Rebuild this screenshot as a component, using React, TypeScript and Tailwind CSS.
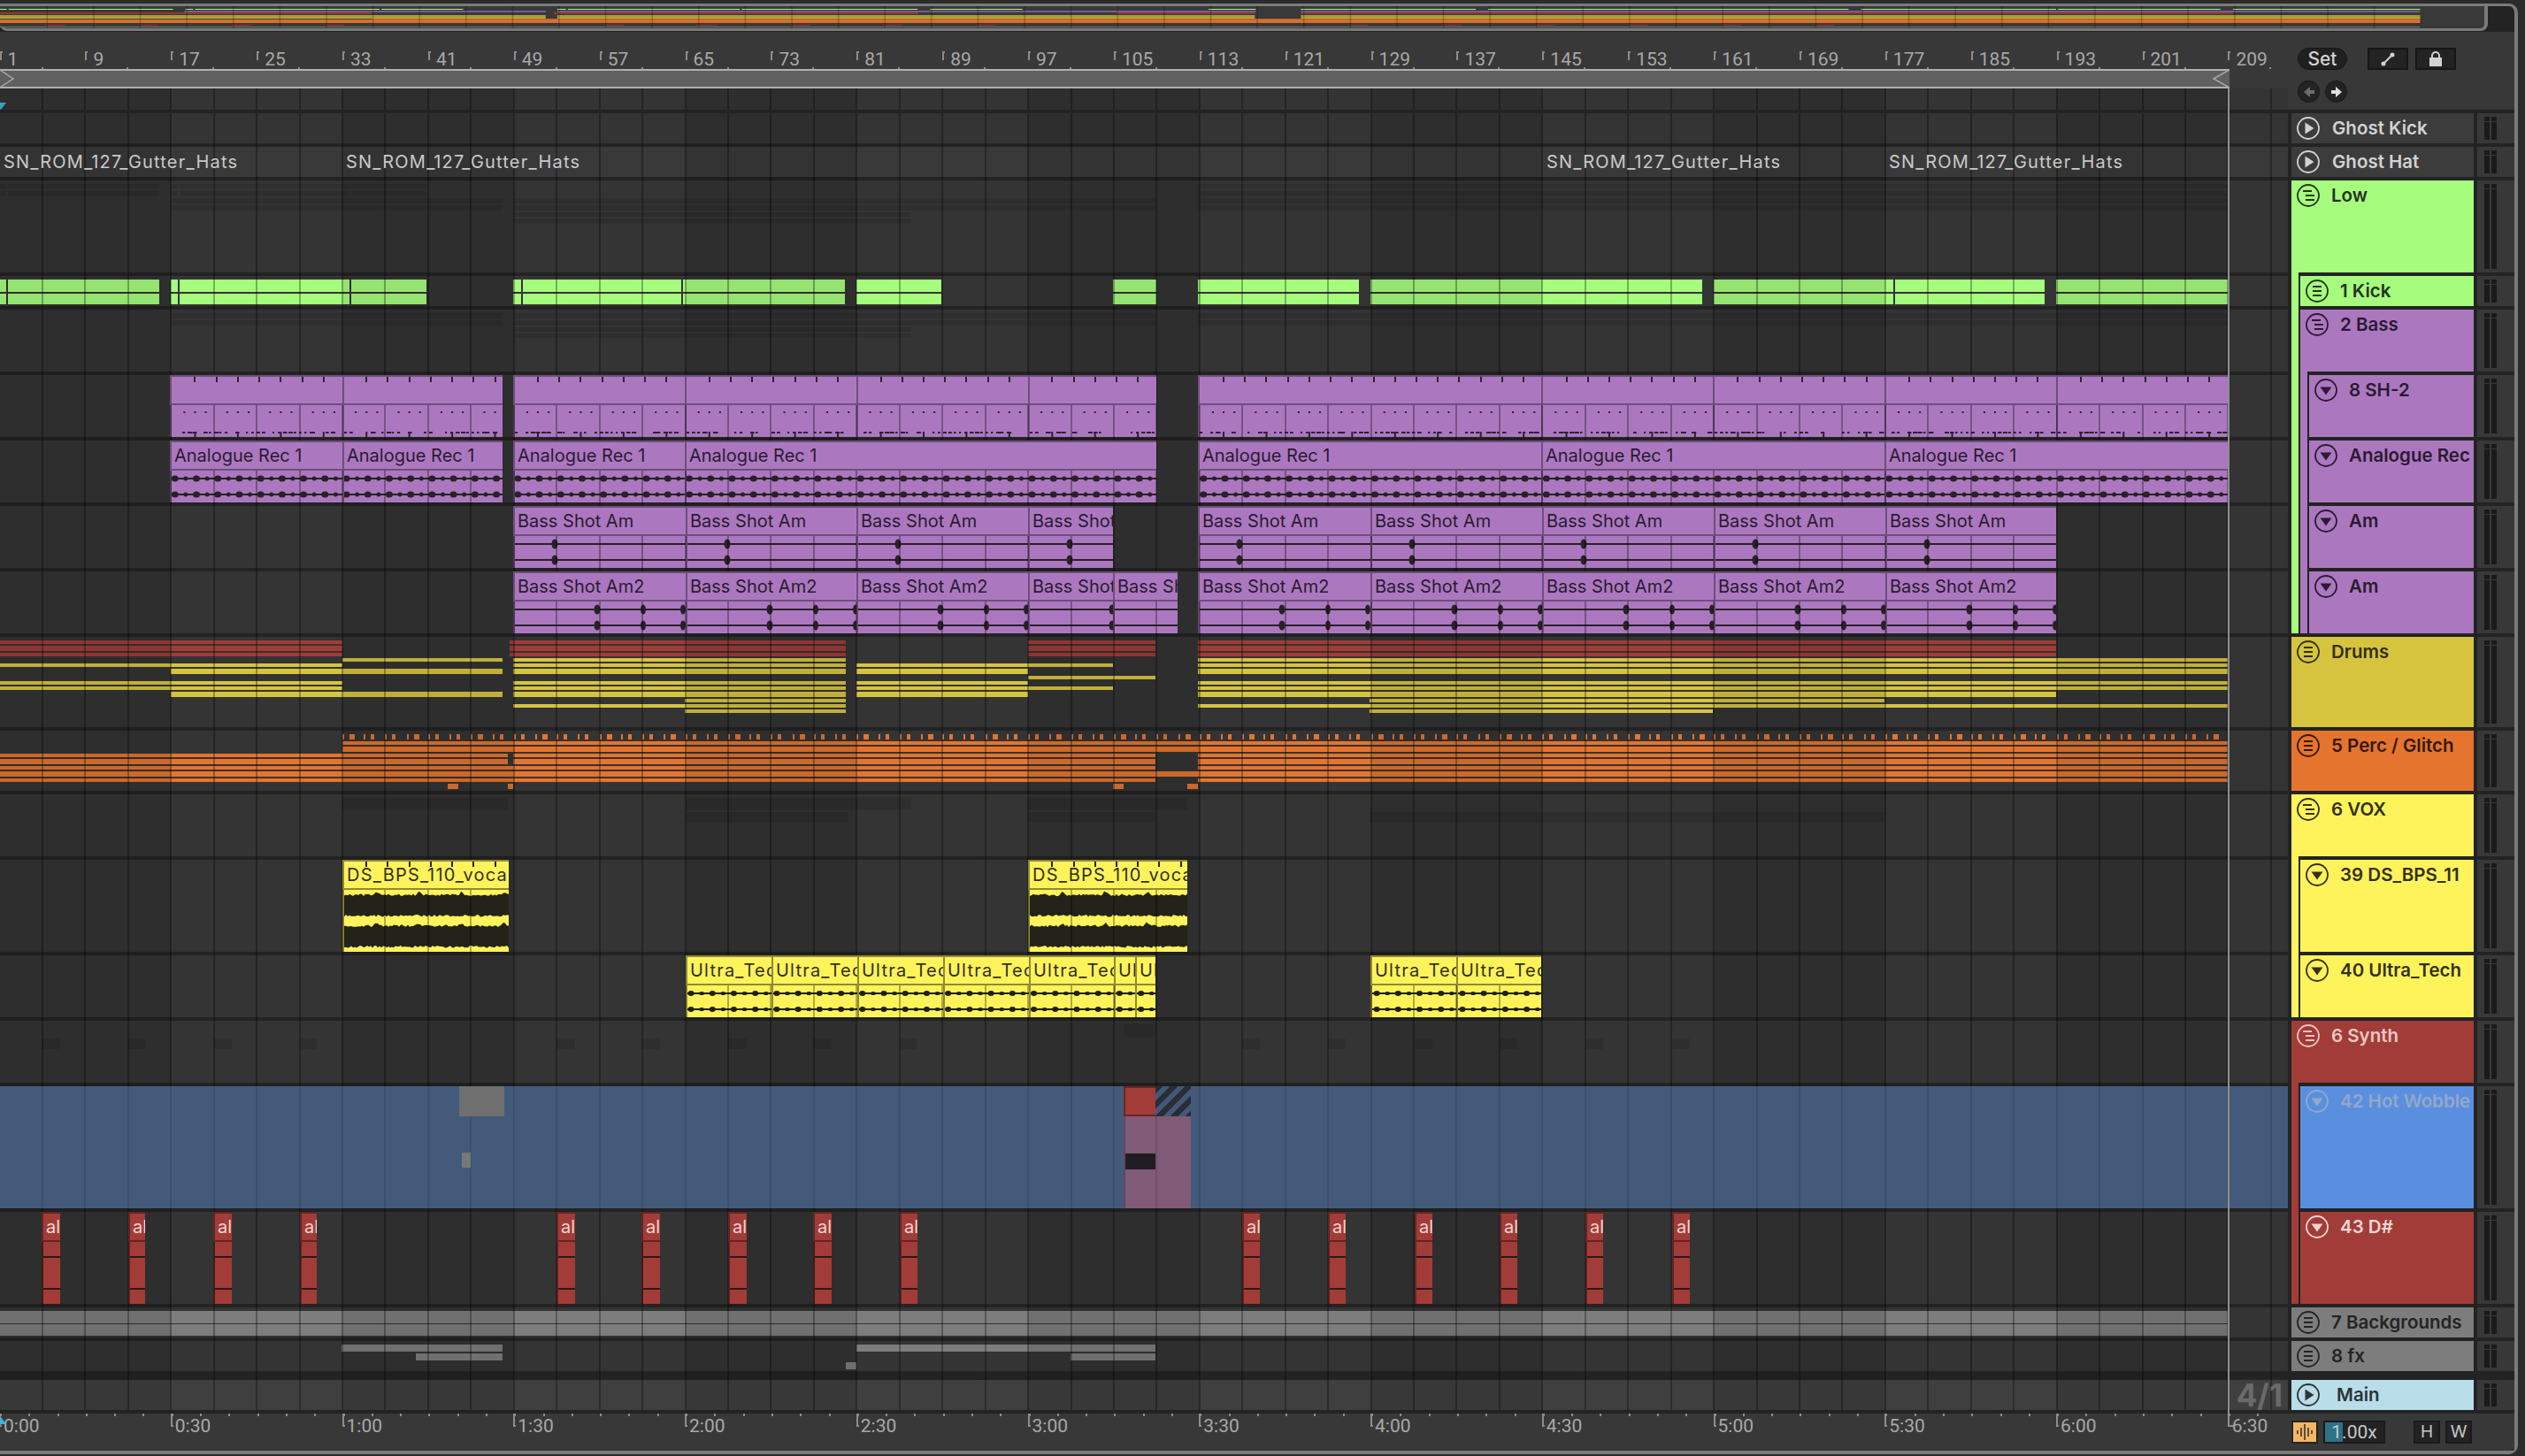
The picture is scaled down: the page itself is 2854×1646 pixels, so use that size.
import React from "react";

const GREEN = "#a6fd7d";
const PURPLE = "#ab78bf";
const DRUM = "#d6c43f";
const ORANGE = "#e5742f";
const VOX = "#fff35c";
const RED = "#a23c38";
const BLUE = "#5a8fe0";
const GRAY = "#7d7d7d";
const K = 48.44;
const xk = (k: number) => k * K - 0.5;
const xb = (b: number) => xk((b - 1) / 4);
const range = (n: number) => Array.from({ length: n }, (_, i) => i);
const rnd = (i: number, s = 0) => {
  const v = Math.sin(i * 12.9898 + s * 78.233) * 43758.5453;
  return v - Math.floor(v);
};

type Seg = [number, number];
type Bar = [number, number, number, number];

function Rect({ b, top, color }: { b: Bar; top: number; color: string }) {
  return (
    <div
      className="absolute"
      style={{ left: b[0], width: b[1] - b[0], top: b[2] - top, height: b[3] - b[2], background: color }}
    />
  );
}

function Grid({ alpha = false }: { alpha?: boolean }) {
  return (
    <>
      {range(13).map((i) =>
        i % 2 === 0 ? (
          <div
            key={"b" + i}
            className="absolute top-0 bottom-0 z-[5] bg-black/10 pointer-events-none"
            style={{ left: xk(i * 4), width: 4 * K }}
          />
        ) : null
      )}
      {range(53).map((i) => (
        <div
          key={i}
          className={"absolute top-0 bottom-0 w-[2px] z-10 pointer-events-none " + (alpha ? "bg-black/10" : "bg-black/30")}
          style={{ left: xk(i + 1) - 1 }}
        />
      ))}
    </>
  );
}

function Clip({
  x1,
  x2,
  title,
  bg,
  edge,
  fg,
  ticks,
  wide,
  children,
}: {
  x1: number;
  x2: number;
  title?: string;
  bg: string;
  edge: string;
  fg: string;
  ticks?: boolean;
  wide?: boolean;
  children?: React.ReactNode;
}) {
  const w = x2 - x1;
  const tickXs = range(120)
    .map((k) => k * (K / 2) - 0.5 - x1)
    .filter((v) => v > 6 && v < w - 2);
  return (
    <div className="absolute top-0 bottom-0 flex flex-col" style={{ left: x1, width: w }}>
      <div
        className={
          "relative z-20 h-[34px] shrink-0 overflow-hidden whitespace-nowrap border-t-2 border-b-2 border-l-2 pl-[3px] font-['Inter',sans-serif] text-[20px] leading-[30px] " +
          (wide ? "tracking-[0.06em]" : "")
        }
        style={{ background: bg, borderColor: edge, color: fg }}
      >
        {title}
        {ticks
          ? tickXs.map((v) => (
              <span key={v} className="absolute top-0 h-[6px] w-[2px] bg-[#2a2230]" style={{ left: v }} />
            ))
          : null}
      </div>
      <div className="relative z-[7] grow overflow-hidden border-l-2" style={{ background: bg, borderColor: edge }}>
        {children}
      </div>
    </div>
  );
}

function Diamonds({ w, marks, color }: { w: number; marks: [number, number, number][]; color: string }) {
  return (
    <svg className="absolute left-0 top-0" width={w} height={36}>
      {[9, 27].map((y) => (
        <g key={y}>
          <rect x={0} y={y - 1} width={w} height={2} fill={color} />
          {marks.map(([x, rx, ry], i) => (
            <ellipse key={i} cx={x} cy={y} rx={rx} ry={ry} fill={color} />
          ))}
        </g>
      ))}
    </svg>
  );
}

function SH2({ x1, x2 }: { x1: number; x2: number }) {
  const w = x2 - x1;
  const dots = range(220)
    .map((k) => k * (K / 4) - 0.5 - x1)
    .filter((v) => v > 4 && v < w - 2);
  return (
    <svg className="absolute left-0 top-0" width={w} height={36}>
      {dots.map((v, i) =>
        i % 4 === 3 ? null : <rect key={"d" + v} x={v} y={7} width={2} height={2} fill="#2a2230" />
      )}
      {range(Math.floor(w / 6)).map((i) =>
        rnd(i, x1) > 0.35 ? (
          <rect key={"s" + i} x={i * 6} y={30} width={2 + rnd(i, 3) * 4} height={2} fill="#2a2230" />
        ) : null
      )}
      {dots.map((v, i) => (i % 4 === 1 ? <rect key={"t" + v} x={v} y={30} width={2} height={6} fill="#2a2230" /> : null))}
    </svg>
  );
}

function Wave({ w, seed }: { w: number; seed: number }) {
  const band = (y0: number, y1: number, s: number) => {
    const top: string[] = [];
    const bot: string[] = [];
    for (let x = 0; x <= w; x += 2) {
      const phase = (x + 3) % 48;
      const peak = phase > 36 && phase < 44 ? 4 - Math.abs(phase - 40) : 0;
      top.push(`${x},${y0 - peak - rnd(x, s) * 2.5}`);
      bot.unshift(`${x},${y1 + rnd(x, s + 5) * 2.5}`);
    }
    return [...top, ...bot].join(" ");
  };
  return (
    <svg className="absolute left-0 top-0" width={w} height={70}>
      <polygon points={band(7, 28, seed)} fill="#23231a" />
      <polygon points={band(42, 63, seed + 11)} fill="#23231a" />
    </svg>
  );
}

const KICK: Seg[] = [
  [0, 7], [9, 180], [193, 201], [203, 395], [397, 482], [580, 589], [591, 770], [772, 955], [968, 1064],
  [1258, 1307], [1354, 1536], [1549, 1924], [1937, 2140], [2142, 2311], [2324, 2519],
];
const SH2_CLIPS: Seg[] = [
  [192, 387], [387, 568], [580, 774], [774, 968], [968, 1162], [1162, 1307], [1354, 1742], [1742, 1936], [1936, 2130], [2130, 2324], [2324, 2519],
];
const ANALOG: Seg[] = [[192, 387], [387, 568], [580, 774], [774, 1307], [1354, 1742], [1742, 2130], [2130, 2519]];
const AM: Seg[] = [[580, 775], [775, 968], [968, 1162], [1162, 1258], [1354, 1549], [1549, 1743], [1743, 1937], [1937, 2131], [2131, 2324]];
const AM2: Seg[] = [[580, 775], [775, 968], [968, 1162], [1162, 1258], [1258, 1331], [1354, 1549], [1549, 1743], [1743, 1937], [1937, 2131], [2131, 2324]];
const AL: Seg[] = [
  [47, 68], [145, 164], [241, 262], [339, 358], [629, 650], [725, 746], [823, 844], [919, 940], [1017, 1037],
  [1404, 1424], [1501, 1521], [1599, 1619], [1695, 1715], [1792, 1812], [1890, 1910],
];
const ULTRA: [number, number, string][] = [
  [775, 872, "Ultra_Tech"], [872, 969, "Ultra_Tech"], [969, 1066, "Ultra_Tech"], [1066, 1163, "Ultra_Tech"],
  [1163, 1259, "Ultra_Tech"], [1259, 1283, "Ultra_Tech"], [1283, 1306, "Ultra_Tech"], [1549, 1646, "Ultra_Tech"], [1646, 1742, "Ultra_Tech"],
];

const RED_BARS: Bar[] = [
  [0, 387, 724, 728], [0, 387, 730, 736], [0, 387, 738, 742],
  [576, 956, 724, 728], [576, 956, 730, 736], [576, 956, 738, 742],
  [1162, 1306, 724, 728], [1162, 1306, 730, 736], [1162, 1306, 738, 742],
  [1354, 2324, 724, 728], [1354, 2324, 730, 736], [1354, 2324, 738, 742],
];
const YEL_BARS: Bar[] = [
  [0, 387, 750, 754], [0, 387, 770, 774], [0, 387, 776, 780], [193, 568, 756, 762], [193, 568, 782, 788],
  [387, 568, 744, 748],
  [580, 956, 744, 748], [580, 956, 750, 754], [580, 956, 756, 762], [580, 956, 770, 774], [580, 956, 776, 780], [580, 956, 782, 788], [580, 956, 796, 800],
  [774, 956, 790, 794], [774, 956, 802, 806],
  [968, 1258, 750, 754], [968, 1162, 756, 762], [968, 1162, 770, 774], [968, 1258, 776, 780], [968, 1162, 782, 788], [1162, 1306, 764, 768],
  [1354, 2519, 744, 748], [1354, 2519, 750, 754], [1354, 2519, 756, 762], [1354, 2519, 770, 774], [1354, 2519, 776, 780], [1354, 2324, 782, 788], [1354, 2519, 796, 800],
  [1548, 2130, 790, 794], [1548, 1936, 802, 806],
];
const ORG_BARS: Bar[] = [
  [387, 2519, 838, 842], [387, 2519, 844, 850],
  [0, 574, 852, 856], [580, 1306, 852, 856], [1354, 2519, 852, 856],
  [0, 574, 858, 864], [580, 1306, 858, 864], [1354, 2519, 858, 864],
  [0, 1306, 866, 870], [1354, 2519, 866, 870],
  [0, 2519, 872, 878],
  [0, 1306, 880, 884], [1354, 2519, 880, 884],
  [506, 518, 886, 892], [574, 580, 886, 892], [1258, 1270, 886, 892], [1342, 1354, 886, 892],
  ...range(88).flatMap((i): Bar[] => {
    const x = xk(8) + (i * K) / 2;
    return [
      [x, x + 2, 830, 836],
      [x + 8, x + (i % 3 === 0 ? 14 : 12), 830, 836],
    ];
  }),
];
const GHOST_A: Bar[] = [
  [0, 7, 208, 213], [9, 180, 208, 213], [0, 7, 216, 222], [9, 180, 216, 222],
  [193, 201, 208, 213], [203, 395, 208, 213], [397, 482, 208, 213], [193, 201, 216, 222], [203, 395, 216, 222], [397, 482, 216, 222],
  [193, 568, 224, 230], [193, 568, 232, 238], [580, 1306, 224, 230], [580, 1306, 232, 238],
  [580, 1030, 240, 245], [580, 1030, 247, 253], [1354, 2519, 208, 213], [1354, 2519, 216, 222], [1354, 2519, 224, 230], [1354, 2519, 232, 238],
];
const GHOST_B: Bar[] = [
  [193, 568, 354, 360], [193, 568, 362, 368], [580, 1306, 354, 360], [580, 1306, 362, 368], [580, 1030, 370, 375], [580, 1030, 377, 382],
  [1354, 2519, 354, 360], [1354, 2519, 362, 368],
];
const GHOST_V: Bar[] = [
  [387, 574, 902, 916], [775, 1030, 902, 916], [1162, 1342, 902, 916], [1162, 1306, 918, 930], [1548, 2130, 918, 930], [775, 958, 918, 930],
];
const GHOST_S: Bar[] = [
  ...AL.map(([a, b]): Bar => [a, b, 1174, 1186]),
  [1270, 1306, 1158, 1172],
];
const FX: Bar[] = [
  [386, 568, 1520, 1528], [470, 568, 1530, 1538], [956, 968, 1540, 1548], [968, 1306, 1520, 1528], [1210, 1306, 1530, 1538],
];

type Row = {
  key: string;
  h: number;
  name: string;
  bg: string;
  fg: string;
  icon: "play" | "group" | "lines" | "down";
  strips?: string[];
  gap?: number;
  lane: (top: number) => React.ReactNode;
  laneBg?: string;
};

const none = () => null;
const bars = (list: Bar[], color: string) => (top: number) => list.map((b, i) => <Rect key={i} b={b} top={top} color={color} />);

const ROWS: Row[] = [
  { key: "gk", h: 34, name: "Ghost Kick", bg: "#3c3c3c", fg: "#d2d2d2", icon: "play", gap: 14, lane: none },
  {
    key: "gh", h: 34, name: "Ghost Hat", bg: "#3c3c3c", fg: "#d2d2d2", icon: "play", gap: 14, laneBg: "#393939",
    lane: () => (
      <>
        {[4, 391, 1748, 2135].map((x) => (
          <span key={x} className="absolute top-[1px] z-20 whitespace-nowrap font-['Inter',sans-serif] text-[20px] leading-[32px] tracking-[0.06em] text-[#c9c9c9]" style={{ left: x }}>
            SN_ROM_127_Gutter_Hats
          </span>
        ))}
      </>
    ),
  },
  { key: "low", h: 104, name: "Low", bg: GREEN, fg: "#26331f", icon: "group", lane: bars(GHOST_A, "rgba(0,0,0,0.1)") },
  {
    key: "kick", h: 34, name: "1 Kick", bg: GREEN, fg: "#26331f", icon: "lines", strips: [GREEN],
    lane: (top) =>
      KICK.flatMap(([a, b], i) => [
        <Rect key={"u" + i} b={[a, b, 316, 330]} top={top} color={GREEN} />,
        <Rect key={"l" + i} b={[a, b, 332, 344]} top={top} color={GREEN} />,
      ]),
  },
  { key: "bass", h: 70, name: "2 Bass", bg: PURPLE, fg: "#2b1a33", icon: "group", strips: [GREEN], lane: bars(GHOST_B, "rgba(0,0,0,0.1)") },
  {
    key: "sh", h: 70, name: "8 SH-2", bg: PURPLE, fg: "#2b1a33", icon: "down", strips: [GREEN, PURPLE],
    lane: () =>
      SH2_CLIPS.map(([a, b]) => (
        <Clip key={a} x1={a} x2={b} bg={PURPLE} edge="#6f4d7d" fg="#2b1a33" ticks>
          <SH2 x1={a} x2={b} />
        </Clip>
      )),
  },
  {
    key: "ar", h: 70, name: "Analogue Rec", bg: PURPLE, fg: "#2b1a33", icon: "down", strips: [GREEN, PURPLE],
    lane: () =>
      ANALOG.map(([a, b]) => (
        <Clip key={a} x1={a} x2={b} title="Analogue Rec 1" bg={PURPLE} edge="#6f4d7d" fg="#2b1a33">
          <Diamonds
            w={b - a}
            color="#2a2028"
            marks={range(220)
              .map((k): [number, number, number] => [k * (K / 4) + 2 - a, k % 2 ? 2.5 : 4, k % 2 ? 2.5 : 3.5])
              .filter((m) => m[0] > -4 && m[0] < b - a + 4)}
          />
        </Clip>
      )),
  },
  {
    key: "am", h: 70, name: "Am", bg: PURPLE, fg: "#2b1a33", icon: "down", strips: [GREEN, PURPLE],
    lane: () =>
      AM.map(([a, b]) => (
        <Clip key={a} x1={a} x2={b} title="Bass Shot Am" bg={PURPLE} edge="#6f4d7d" fg="#2b1a33">
          <Diamonds w={b - a} color="#2a2028" marks={[[45, 3.5, 5.5]]} />
        </Clip>
      )),
  },
  {
    key: "am2", h: 70, name: "Am", bg: PURPLE, fg: "#2b1a33", icon: "down", strips: [GREEN, PURPLE],
    lane: () =>
      AM2.map(([a, b]) => (
        <Clip key={a} x1={a} x2={b} title="Bass Shot Am2" bg={PURPLE} edge="#6f4d7d" fg="#2b1a33">
          <Diamonds w={b - a} color="#2a2028" marks={b - a > 90 ? [[93, 3.5, 5.5], [145, 3, 5.5], [190, 3, 5.5]] : []} />
        </Clip>
      )),
  },
  {
    key: "drums", h: 102, name: "Drums", bg: DRUM, fg: "#332e10", icon: "lines",
    lane: (top) => (
      <>
        {bars(RED_BARS, RED)(top)}
        {bars(YEL_BARS, DRUM)(top)}
      </>
    ),
  },
  { key: "perc", h: 68, name: "5 Perc / Glitch", bg: ORANGE, fg: "#33190b", icon: "lines", lane: bars(ORG_BARS, ORANGE) },
  { key: "vox", h: 70, name: "6 VOX", bg: VOX, fg: "#33311a", icon: "group", lane: bars(GHOST_V, "rgba(0,0,0,0.1)") },
  {
    key: "ds", h: 104, name: "39 DS_BPS_11", bg: VOX, fg: "#33311a", icon: "down", strips: [VOX],
    lane: () =>
      ([[387, 575], [1162, 1342]] as Seg[]).map(([a, b], i) => (
        <Clip key={a} x1={a} x2={b} title="DS_BPS_110_vocal" bg={VOX} edge="#8f8a33" fg="#33311a" ticks wide>
          <Wave w={b - a} seed={i + 1} />
        </Clip>
      )),
  },
  {
    key: "ultra", h: 70, name: "40 Ultra_Tech", bg: VOX, fg: "#33311a", icon: "down", strips: [VOX],
    lane: () =>
      ULTRA.map(([a, b, t]) => (
        <Clip key={a} x1={a} x2={b} title={t} bg={VOX} edge="#8f8a33" fg="#33311a" wide>
          <Diamonds
            w={b - a}
            color="#1f1f14"
            marks={range(220)
              .map((k): [number, number, number] => [k * (K / 4) + 4 - a, k % 2 ? 3 : 3.5, k % 2 ? 2 : 3])
              .filter((m) => m[0] > -4 && m[0] < b - a + 4)}
          />
        </Clip>
      )),
  },
  { key: "synth", h: 70, name: "6 Synth", bg: RED, fg: "#eac6c4", icon: "group", lane: bars(GHOST_S, "rgba(0,0,0,0.1)") },
  {
    key: "hot", h: 138, name: "42 Hot Wobble", bg: BLUE, fg: "#93a8c9", icon: "down", strips: [RED],
    lane: () => (
      <div className="absolute inset-0 z-[11] bg-[#435a7b]">
        {range(53).map((i) => (
          <div key={i} className="absolute top-0 bottom-0 w-[2px] bg-black/10" style={{ left: xk(i + 1) - 1 }} />
        ))}
        <div className="absolute left-[519px] top-0 h-[34px] w-[51px] bg-[#6f6f6f]" />
        <div className="absolute left-[522px] top-[75px] h-[17px] w-[10px] bg-[#777777]" />
        <div className="absolute left-[1270px] top-0 h-[34px] w-[36px] border-t-2 border-b-2 border-l-2 border-[#6b2523] bg-[#a23c38]" />
        <div className="absolute left-[1306px] top-0 h-[34px] w-[40px] bg-[repeating-linear-gradient(135deg,#2a2d34_0_6px,#41587a_6px_12px)]" />
        <div className="absolute left-[1270px] top-[34px] bottom-0 w-[76px] border-l-2 border-[#5f4760] bg-[#805a76]" />
        <div className="absolute left-[1272px] top-[76px] h-[18px] w-[34px] bg-[#201e22]" />
        <div className="absolute left-[1306px] top-[34px] bottom-0 w-[2px] bg-black/10" />
      </div>
    ),
  },
  {
    key: "d", h: 104, name: "43 D#", bg: RED, fg: "#f0d6d4", icon: "down", strips: [RED],
    lane: () =>
      AL.map(([a, b]) => (
        <Clip key={a} x1={a} x2={b} title="al" bg={RED} edge="#642523" fg="#f3d3d1">
          <div className="absolute left-0 right-0 top-[16px] h-[2px] bg-[#2a1a1a]" />
          <div className="absolute left-0 right-0 top-[52px] h-[2px] bg-[#2a1a1a]" />
        </Clip>
      )),
  },
  {
    key: "bg", h: 34, name: "7 Backgrounds", bg: GRAY, fg: "#242424", icon: "lines",
    lane: bars([[0, 2519, 1482, 1496], [0, 2519, 1497, 1510]], GRAY),
  },
  { key: "fx", h: 34, name: "8 fx", bg: GRAY, fg: "#242424", icon: "lines", lane: bars(FX, GRAY) },
  {
    key: "main", h: 34, name: "Main", bg: "#b9dde9", fg: "#2c3438", icon: "play", gap: 19, laneBg: "#3f3f3f",
    lane: () => (
      <span className="absolute right-[6px] top-0 z-20 font-['Inter',sans-serif] text-[35px] font-bold leading-[34px] text-[#6a6a6a]">4/1</span>
    ),
  },
];

function Icon({ kind }: { kind: Row["icon"] }) {
  return (
    <svg width="26" height="26" viewBox="-13 -13 26 26" className="shrink-0" fill="none" stroke="currentColor">
      <circle r="12" strokeWidth="1.8" />
      {kind === "play" && <path d="M-3.5 -6.5 L6.5 0 L-3.5 6.5 Z" fill="currentColor" stroke="none" />}
      {kind === "down" && <path d="M-6.5 -3.5 L6.5 -3.5 L0 5.5 Z" fill="currentColor" stroke="none" />}
      {kind === "lines" && <path d="M-5 -5 H5 M-5 0 H5 M-5 5 H5" strokeWidth="2" />}
      {kind === "group" && <path d="M-6 -5 H4 M-3 0 H7 M-3 5 H7" strokeWidth="2" />}
    </svg>
  );
}

function Meter() {
  return (
    <div className="flex h-full w-[42px] shrink-0 gap-[2px] bg-[#383838] pl-[8px] py-[4px]">
      {[0, 1].map((i) => (
        <div key={i} className="flex h-full w-[6px] flex-col gap-px">
          <div className="h-[5px] shrink-0 bg-[#1a1a1a]" />
          <div className="grow bg-[#1a1a1a]" />
        </div>
      ))}
    </div>
  );
}

function TrackRow({ row, top, mt }: { row: Row; top: number; mt: number }) {
  return (
    <div className="flex shrink-0" style={{ height: row.h, marginTop: mt }}>
      <div className="relative w-[2586px] shrink-0" style={{ background: row.laneBg ?? "#343434" }}>
        {row.lane(top)}
      </div>
      <div className="flex w-[210px] shrink-0 pl-[4px]">
        {(row.strips ?? []).map((c, i) => (
          <React.Fragment key={i}>
            <div className="-mt-1 w-[8px] shrink-0" style={{ background: c }} />
            <div className="w-[2px] shrink-0" />
          </React.Fragment>
        ))}
        <div
          className="flex h-full min-w-0 grow items-start overflow-hidden whitespace-nowrap pl-[6px] pt-[4px] font-['Inter',sans-serif] text-[20.5px] font-semibold leading-[26px]"
          style={{ background: row.bg, color: row.fg }}
        >
          <Icon kind={row.icon} />
          <span style={{ marginLeft: row.gap ?? 13 }}>{row.name}</span>
        </div>
      </div>
      <div className="w-[4px] shrink-0" />
      <Meter />
    </div>
  );
}

function Overview() {
  const s = 1.086;
  const items: { x: number; w: number; y: number; h: number; c: string }[] = [];
  const add = (list: Seg[], y: number, h: number, c: string) =>
    list.forEach(([a, b]) => items.push({ x: a * s, w: (b - a) * s, y, h, c }));
  add(KICK, 3, 1, GREEN);
  add(SH2_CLIPS, 5, 2, "#7a5a96");
  add([[0, 387], [576, 956], [1162, 1306], [1354, 2324]], 7, 2, "#8a3a36");
  add([[0, 568], [580, 1306], [1354, 2519]], 10, 3, "#a89a35");
  add([[0, 568], [580, 1306], [1354, 2519]], 13, 1, "#c4b43c");
  add([[0, 2519]], 15, 4, "#d8702c");
  add([[387, 2519]], 14, 1, "#a8602c");
  add(AL, 21, 1, "#8a3a36");
  add([[0, 2519]], 23, 1, "#777777");
  return (
    <div className="relative h-[29px] w-[2812px] bg-[#232323]">
      <div className="relative h-[28px] rounded-b-[8px] border-r-4 border-b-[3px] border-[#7a7a7a] bg-[#393939]">
        <svg className="absolute left-0 top-0" width="2736" height="25">
          {items.map((it, i) => (
            <rect key={i} x={it.x} y={it.y} width={it.w} height={it.h} fill={it.c} />
          ))}
          {range(52).map((i) => (
            <rect key={"g" + i} x={(i + 1) * K * s} y={0} width={1.5} height={25} fill="rgba(0,0,0,0.22)" />
          ))}
        </svg>
      </div>
    </div>
  );
}

function Ruler() {
  return (
    <div className="relative h-[42px] bg-[#383838] font-['Roboto',sans-serif] text-[21px] leading-[26px] text-[#a8a8a8]">
      {range(27).map((i) => {
        const b = 1 + i * 8;
        const x = xb(b);
        return (
          <React.Fragment key={b}>
            <div className="absolute top-[22px] h-[10px] w-[3px] border-l-2 border-t-2 border-[#8c8c8c]" style={{ left: x }} />
            <span className="absolute top-[18px] whitespace-nowrap" style={{ left: x + 9 }}>
              {b}
            </span>
            <div className="absolute top-[40px] h-[2px] w-[2px] bg-[#8c8c8c]" style={{ left: x + 47 }} />
          </React.Fragment>
        );
      })}
    </div>
  );
}

function LoopBar() {
  return (
    <div className="relative h-[22px] w-[2520px] border-y-2 border-[#b0b0b0] bg-[#606060]">
      <svg className="absolute left-0 top-[-2px]" width="20" height="22" fill="none" stroke="#a8a8a8" strokeWidth="1.5">
        <path d="M0 1 L15 11 L0 21" />
      </svg>
      <svg className="absolute right-0 top-[-2px]" width="20" height="22" fill="none" stroke="#a8a8a8" strokeWidth="1.5">
        <path d="M20 1 L2 11 L20 21" />
      </svg>
    </div>
  );
}

function TimeRuler() {
  const labels = ["0:00", "0:30", "1:00", "1:30", "2:00", "2:30", "3:00", "3:30", "4:00", "4:30", "5:00", "5:30", "6:00", "6:30"];
  return (
    <div className="relative h-[42px] w-[2586px] shrink-0 font-['Roboto',sans-serif] text-[21px] leading-[26px] text-[#a8a8a8]">
      {range(80).map((i) => (
        <div key={"t" + i} className="absolute top-0 h-[3px] w-[2px] bg-[#8c8c8c]" style={{ left: (i * K * 4) / 6 }} />
      ))}
      {labels.map((t, i) => {
        const x = i * 193.75 - 1;
        return (
          <React.Fragment key={t}>
            <div className="absolute top-0 h-[15px] w-[3px] border-l-2 border-b-2 border-[#8c8c8c]" style={{ left: x }} />
            <span className="absolute top-[1px]" style={{ left: x + 5 }}>
              {t}
            </span>
          </React.Fragment>
        );
      })}
      <div className="absolute -left-[5px] top-[4px] h-0 w-0 border-x-[6px] border-b-[8px] border-x-transparent border-b-[#3eb4d6]" />
    </div>
  );
}

function Controls() {
  return (
    <div className="h-[88px] w-[256px] shrink-0 bg-[#383838] pl-[11px] pt-[18px]">
      <div className="flex items-center">
        <div className="flex h-[25px] w-[56px] items-center justify-center rounded-full border border-[#161616] bg-[#202020] font-['Inter',sans-serif] text-[21px] font-medium text-[#d2d2d2]">
          Set
        </div>
        <div className="ml-[23px] flex h-[25px] w-[46px] items-center justify-center border-2 border-[#161616] bg-[#232323]">
          <svg width="16" height="16" viewBox="0 0 16 16" stroke="#d2d2d2" fill="#d2d2d2">
            <path d="M3 13 L13 3" strokeWidth="2" />
            <circle cx="13" cy="3" r="2.5" stroke="none" />
            <circle cx="3" cy="13" r="2.5" stroke="none" />
          </svg>
        </div>
        <div className="ml-[8px] flex h-[25px] w-[46px] items-center justify-center border-2 border-[#161616] bg-[#232323]">
          <svg width="16" height="18" viewBox="0 0 16 18" fill="#d2d2d2">
            <rect x="1" y="7" width="14" height="10" />
            <path d="M4 8 V5 A4 4 0 0 1 12 5 V8" fill="none" stroke="#d2d2d2" strokeWidth="2" />
          </svg>
        </div>
      </div>
      <div className="mt-[12px] flex gap-[6px]">
        {[
          { c: "#6c6c6c", d: "M9 2 L2 8 L9 14 V10 H14 V6 H9 Z" },
          { c: "#e0e0e0", d: "M7 2 L14 8 L7 14 V10 H2 V6 H7 Z" },
        ].map((o) => (
          <div key={o.c} className="flex h-[25px] w-[25px] items-center justify-center rounded-full border border-[#161616] bg-[#232323]">
            <svg width="16" height="16" viewBox="0 0 16 16">
              <path d={o.d} fill={o.c} />
            </svg>
          </div>
        ))}
      </div>
    </div>
  );
}

export default function App() {
  let y = 128;
  const placed = ROWS.map((r, i) => {
    const mt = i === 0 ? 0 : r.key === "main" ? 10 : 4;
    y += mt;
    const top = y;
    y += r.h;
    return { r, top, mt };
  });
  return (
    <div className="h-[1646px] w-[2854px] overflow-hidden bg-[#2b2b2b] pt-[4px]">
      <div className="relative flex h-[1640px] w-[2846px] flex-col rounded-tr-[10px] rounded-br-[10px] border-t-[3px] border-r-4 border-b-4 border-[#7a7a7a] bg-[#232323]">
        <Overview />
        <div className="flex shrink-0">
          <div className="w-[2586px] shrink-0">
            <Ruler />
            <div className="bg-[#383838]">
              <LoopBar />
            </div>
            <div className="relative h-[24px] bg-[#343434]">
              <Grid />
              <div className="absolute -left-[5px] top-[16px] h-0 w-0 border-x-[6px] border-t-[8px] border-x-transparent border-t-[#3eb4d6]" />
            </div>
          </div>
          <Controls />
        </div>
        <div className="relative mt-[4px] flex flex-col">
          {placed.map(({ r, top, mt }) => (
            <TrackRow key={r.key} row={r} top={top} mt={mt} />
          ))}
          <div className="absolute bottom-0 left-0 top-0 w-[2586px]">
            <Grid />
          </div>
        </div>
        <div className="mt-[4px] flex h-[42px] shrink-0 bg-[#383838]">
          <TimeRuler />
          <div className="ml-[4px] mt-[8px] flex h-[26px] w-[30px] items-center justify-center border-2 border-[#232323] bg-[#f5b565]">
            <svg width="22" height="20" viewBox="0 0 22 20" stroke="#2b2b2b" strokeWidth="1.5">
              <path d="M3 8 V12 M7 5 V15 M11 1 V19 M15 5 V15 M19 8 V12" />
            </svg>
          </div>
          <div className="relative ml-[6px] mt-[8px] h-[26px] w-[70px] border-2 border-[#1a1a1a] bg-[#232323] text-center font-['Roboto',sans-serif] text-[21px] leading-[22px] text-[#c8c8c8]">
            <div className="absolute bottom-0 left-0 top-0 w-[20px] bg-[#2e7286]" />
            <span className="relative">1.00x</span>
          </div>
          <div className="ml-[32px] mt-[8px] h-[26px] w-[30px] border-2 border-[#1a1a1a] bg-[#232323] text-center font-['Inter',sans-serif] text-[19px] leading-[22px] text-[#c8c8c8]">
            H
          </div>
          <div className="ml-[6px] mt-[8px] h-[26px] w-[30px] border-2 border-[#1a1a1a] bg-[#232323] text-center font-['Inter',sans-serif] text-[19px] leading-[22px] text-[#c8c8c8]">
            W
          </div>
        </div>
        <div className="absolute left-[2518px] top-[93px] z-30 h-[1513px] w-[2px] bg-[#8f8f8f]" />
        <div className="absolute left-[2518px] top-[1604px] z-30 h-[2px] w-[6px] bg-[#8f8f8f]" />
      </div>
    </div>
  );
}
